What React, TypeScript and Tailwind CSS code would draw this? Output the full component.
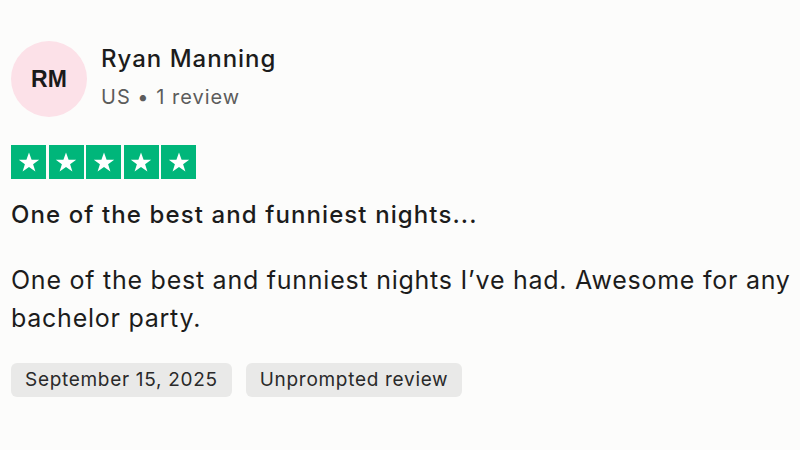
import React from 'react';

function Star() {
  return (
    <div className="w-[35px] h-[34px] bg-[#00b67a] flex items-center justify-center">
      <svg viewBox="0 0 24 24" className="w-[24px] h-[24px]" fill="#ffffff">
        <path d="M12 2.5l2.6 7.2h7.6l-6.1 4.5 2.3 7.3L12 17l-6.4 4.5 2.3-7.3-6.1-4.5h7.6z" />
      </svg>
    </div>
  );
}

export default function App() {
  return (
    <div className="w-[800px] h-[450px] bg-[#fcfcfb] text-[#1c1c1c] font-['Inter',sans-serif] pl-[11px] pr-[2px] pt-[41px]">
      <div className="flex items-start gap-[14px]">
        <div className="w-[76px] h-[76px] rounded-full bg-[#fce1e8] flex items-center justify-center">
          <span className="font-['Liberation_Sans',sans-serif] text-[23px] font-semibold text-[#1a1a1a]">RM</span>
        </div>
        <div className="flex flex-col pt-[1px]">
          <span className="text-[24px] leading-[34px] font-medium tracking-[1px]">Ryan Manning</span>
          <span className="text-[20px] leading-[28px] text-[#5c5c5c] mt-[7px] tracking-[1px]">US • 1 review</span>
        </div>
      </div>

      <div className="flex gap-[2.5px] mt-[28px]">
        <Star />
        <Star />
        <Star />
        <Star />
        <Star />
      </div>

      <h2 className="text-[24px] leading-[30px] font-medium mt-[21px] tracking-[1.1px]">
        One of the best and funniest nights...
      </h2>

      <p className="text-[25px] leading-[38px] mt-[31px] tracking-[0.75px]">
        One of the best and funniest nights I’ve had. Awesome for any bachelor party.
      </p>

      <div className="flex gap-[14px] mt-[26px]">
        <span className="h-[34px] px-[14px] rounded-[6px] bg-[#e9e9e8] text-[19px] tracking-[0.7px] flex items-center text-[#2a2a2a]">
          September 15, 2025
        </span>
        <span className="h-[34px] px-[14px] rounded-[6px] bg-[#e9e9e8] text-[19px] tracking-[0.7px] flex items-center text-[#2a2a2a]">
          Unprompted review
        </span>
      </div>
    </div>
  );
}
